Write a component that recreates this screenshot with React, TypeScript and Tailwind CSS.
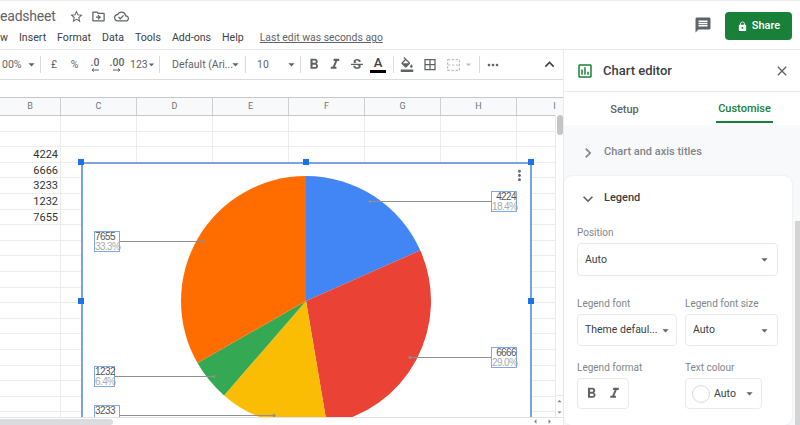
import {
  MdArrowDropDown, MdBorderAll, MdChevronRight, MdClose, MdExpandLess, MdExpandMore, MdFormatBold,
  MdFormatColorFill, MdFormatItalic, MdLock, MdMessage, MdMoreHoriz, MdMoreVert, MdOutlineCloudDone,
  MdOutlineDriveFileMove, MdOutlineInsertChart, MdOutlineStarBorder, MdStrikethroughS, MdArrowLeft,
  MdArrowRight, MdArrowDropUp,
} from 'react-icons/md';

const columns = ['B', 'C', 'D', 'E', 'F', 'G', 'H', 'I'];
const values = ['', '', '4224', '6666', '3233', '1232', '7655', '', '', '', '', '', '', '', '', '', '', '', '', ''];

const slices = [
  { value: 4224, color: '#4285f4' },
  { value: 6666, color: '#ea4335' },
  { value: 3233, color: '#fbbc04' },
  { value: 1232, color: '#34a853' },
  { value: 7655, color: '#ff6d01' },
];

const labels = [
  { value: '4224', pct: '18.4%', box: 'left-[408px] top-[27px] w-[26px] h-[21px] text-right' },
  { value: '7655', pct: '33.3%', box: 'left-[11px] top-[67px] w-[26px] h-[21px] text-left' },
  { value: '6666', pct: '29.0%', box: 'left-[408px] top-[183px] w-[26px] h-[21px] text-right' },
  { value: '1232', pct: '6.4%', box: 'left-[11px] top-[202px] w-[21px] h-[21px] text-left' },
  { value: '3233', pct: '', box: 'left-[11px] top-[241px] w-[26px] h-[21px] text-left' },
];

// leader lines in chart coordinates, dot end first
const leaders = [
  [287, 37.5, 408, 37.5],
  [120, 77.5, 37, 77.5],
  [327, 193.5, 408, 193.5],
  [131, 212.5, 32, 212.5],
  [191, 251.5, 37, 251.5],
];

const CX = 223;
const CY = 137;
const R = 125;
const total = slices.reduce((sum, s) => sum + s.value, 0);

const point = (fraction: number) => {
  const a = fraction * Math.PI * 2;
  return `${CX + R * Math.sin(a)} ${CY - R * Math.cos(a)}`;
};

const Divider = ({ className = '' }: { className?: string }) => (
  <div className={`h-[17px] w-px shrink-0 bg-[#dadce0] ${className}`} />
);

const Caret = ({ className = '' }: { className?: string }) => (
  <MdArrowDropDown className={`w-[15px] shrink-0 text-[15px] text-[#5f6368] ${className}`} />
);

const Pie = () => {
  let start = 0;
  return (
    <svg className="absolute left-0 top-0" width="448" height="270" viewBox="0 0 448 270">
      {slices.map(s => {
        const end = start + s.value / total;
        const large = end - start > 0.5 ? 1 : 0;
        const d = `M ${CX} ${CY} L ${point(start)} A ${R} ${R} 0 ${large} 1 ${point(end)} Z`;
        start = end;
        return <path key={s.value} d={d} fill={s.color} />;
      })}
      {leaders.map(l => (
        <g key={l[1]}>
          <line x1={l[0]} y1={l[1]} x2={l[2]} y2={l[3]} stroke="#8f8f8f" strokeWidth="1" />
          <circle cx={l[0]} cy={l[1]} r="1.6" fill="#8f8f8f" />
        </g>
      ))}
    </svg>
  );
};

const Handle = ({ className }: { className: string }) => (
  <div className={`absolute h-[6px] w-[6px] bg-[#1a73e8] ${className}`} />
);

const Decimal = ({ text, arrow, className }: { text: string; arrow: string; className: string }) => (
  <div className={`flex shrink-0 flex-col items-center leading-[10px] ${className}`}>
    <span className="text-[10.5px] font-medium">{text}</span>
    <svg width="8" height="4" viewBox="0 0 8 4" fill="none" stroke="#5f6368" strokeWidth="1">
      <path d={arrow} />
    </svg>
  </div>
);

const Toolbar = () => (
  <div className="flex h-[30px] items-center whitespace-nowrap border-b border-[#dadce0] text-[10.5px] text-[#5f6368]">
    <span className="w-[24px] shrink-0 pl-[2px]">00%</span>
    <Caret />
    <Divider className="ml-[1px]" />
    <span className="ml-[3px] w-[20px] shrink-0 text-center">£</span>
    <span className="w-[21px] shrink-0 text-center">%</span>
    <Decimal text=".0" arrow="M8 2 H1 M3 0.5 L1 2 L3 3.5" className="w-[20px]" />
    <Decimal text=".00" arrow="M0 2 H7 M5 0.5 L7 2 L5 3.5" className="w-[24px]" />
    <span className="ml-[1px] w-[16px] shrink-0 text-center">123</span>
    <MdArrowDropDown className="-ml-[1px] w-[13px] shrink-0 text-[13px]" />
    <Divider className="ml-[1px]" />
    <span className="ml-[12px] w-[54px] shrink-0">Default (Ari...</span>
    <Caret className="ml-[2px]" />
    <Divider className="ml-[2px]" />
    <span className="ml-[11px] w-[27px] shrink-0">10</span>
    <Caret />
    <Divider className="ml-[1px]" />
    <MdFormatBold className="ml-[3px] w-[20px] shrink-0 text-[17px]" />
    <MdFormatItalic className="ml-[1px] w-[20px] shrink-0 text-[17px]" />
    <MdStrikethroughS className="ml-[2px] w-[20px] shrink-0 text-[16px]" />
    <div className="ml-[1px] flex w-[20px] shrink-0 flex-col items-center leading-none">
      <span className="text-[13px] font-medium text-[#3c4043]">A</span>
      <div className="mt-[1px] h-[3px] w-[16px] bg-black" />
    </div>
    <Divider className="ml-[5px]" />
    <MdFormatColorFill className="ml-[3px] w-[20px] shrink-0 text-[15px]" />
    <MdBorderAll className="ml-[3px] w-[20px] shrink-0 text-[15px]" />
    <svg className="ml-[7px] shrink-0" width="13" height="12" viewBox="0 0 13 12" fill="none" stroke="#bdc1c6" strokeWidth="1.2" strokeDasharray="2.5 1.5">
      <rect x="0.6" y="0.6" width="11.8" height="10.8" />
      <path d="M1 6 H12" />
    </svg>
    <MdArrowDropDown className="ml-[2px] w-[13px] shrink-0 text-[13px] text-[#bdc1c6]" />
    <Divider className="ml-[4px]" />
    <MdMoreHoriz className="ml-[5px] w-[16px] shrink-0 text-[16px]" />
    <MdExpandLess className="ml-[39px] w-[19px] shrink-0 text-[19px] text-[#3c4043]" />
  </div>
);

const Sheet = () => (
  <div className="relative min-h-0 flex-1 overflow-hidden">
    <div className="h-[17px]" />
    <div className="flex h-[19px] border-y border-[#c7c7c7] bg-[#f8f9fa] text-[9px] text-[#70757a]">
      {columns.map((c, i) => (
        <div key={c} className={`flex shrink-0 items-center justify-center border-r border-[#d0d0d0] ${i === 0 ? 'w-[61px]' : 'w-[76px]'}`}>
          {c}
        </div>
      ))}
    </div>
    {values.map((v, i) => (
      <div key={i} className="flex h-[15.6px] border-b border-[#ececec] text-[11px] leading-[15px] text-[#333]">
        {columns.map((c, j) => (
          <div key={c} className={`shrink-0 border-r border-[#ececec] pr-[2px] text-right ${j === 0 ? 'w-[61px]' : 'w-[76px]'}`}>
            {j === 0 ? v : ''}
          </div>
        ))}
      </div>
    ))}

    {/* chart floats over the grid */}
    <div className="absolute left-[81px] top-[82px] h-[300px] w-[451px] border-x-2 border-t-2 border-x-[#7ea2e0] border-t-[#7ea2e0] bg-white font-['Liberation_Sans',sans-serif]">
      <Pie />
      {labels.map(l => (
        <div key={l.value} className={`absolute whitespace-nowrap border border-[#7ea8ea] text-[10px] leading-[10px] tracking-[-0.6px] ${l.box}`}>
          <div className="text-[#555]">{l.value}</div>
          {l.pct && <div className="text-[#aaa]">{l.pct}</div>}
        </div>
      ))}
      <MdMoreVert className="absolute left-[428px] top-[3px] text-[17px] text-[#5f6368]" />
    </div>
    <Handle className="left-[78px] top-[79px]" />
    <Handle className="left-[303px] top-[79px]" />
    <Handle className="left-[528px] top-[79px]" />
    <Handle className="left-[78px] top-[218px]" />
    <Handle className="left-[528px] top-[218px]" />

    {/* vertical scrollbar */}
    <div className="absolute bottom-[8px] right-0 top-[35px] flex w-[8px] flex-col justify-end border-l border-[#e8e8e8] bg-white">
      <div className="absolute left-[1px] top-0 h-[20px] w-[6px] rounded bg-[#c4c4c4]" />
      <div className="flex h-[22px] flex-col items-center border-t border-[#e8e8e8] text-[#80868b]">
        <MdArrowDropUp className="text-[11px]" />
        <MdArrowDropDown className="text-[11px]" />
      </div>
    </div>

    {/* horizontal scrollbar */}
    <div className="absolute bottom-0 left-0 flex h-[8px] w-full items-center border-t border-[#e3e3e3] bg-white">
      <div className="h-[6px] w-[113px] rounded-r bg-[#dadce0]" />
      <div className="ml-auto mr-[8px] flex gap-[3px] text-[#80868b]">
        <MdArrowLeft className="text-[11px]" />
        <MdArrowRight className="text-[11px]" />
      </div>
    </div>
  </div>
);

const Label = ({ children }: { children: string }) => (
  <div className="mb-[4px] whitespace-nowrap text-[10px] leading-[12px] text-[#80868b]">{children}</div>
);

const Select = ({ text, className }: { text: string; className: string }) => (
  <div className={`flex items-center justify-between whitespace-nowrap rounded border border-[#e8eaed] pl-[7px] pr-[5px] text-[10.5px] text-[#3c4043] ${className}`}>
    <span>{text}</span>
    <Caret />
  </div>
);

const Editor = () => (
  <div className="flex w-[237px] shrink-0 flex-col border-l border-[#ececec] bg-white">
    <div className="flex h-[42px] shrink-0 items-center border-b border-[#e8eaed] pl-[12px] pr-[10px]">
      <MdOutlineInsertChart className="text-[18px] text-[#188038]" />
      <span className="ml-[9px] text-[13px] font-medium text-[#3c4043]">Chart editor</span>
      <MdClose className="ml-auto text-[16px] text-[#5f6368]" />
    </div>
    <div className="flex h-[33px] shrink-0 pt-[6px] text-[11px] font-medium">
      <div className="flex h-[25px] w-[121px] items-center justify-center text-[#5f6368]">Setup</div>
      <div className="ml-[31px] flex h-[25px] w-[57px] items-center justify-center border-b-2 border-[#188038] text-[#188038]">Customise</div>
    </div>
    <div className="relative flex min-h-0 flex-1 flex-col bg-[#f8f9fa] pr-[8px]">
      <div className="flex h-[51px] shrink-0 items-center pl-[14px] pt-[4px] text-[11px] font-medium text-[#80868b]">
        <MdChevronRight className="text-[20px] text-[#80868b]" />
        <span className="ml-[6px]">Chart and axis titles</span>
      </div>
      <div className="flex-1 rounded-lg bg-white pl-[13px] shadow-[0_0_2px_rgba(60,64,67,0.12)]">
        <div className="flex h-[45px] items-center text-[11px] font-medium text-[#3c4043]">
          <MdExpandMore className="ml-[1px] text-[20px] text-[#5f6368]" />
          <span className="ml-[6px]">Legend</span>
        </div>
        <div className="mt-[6px]"><Label>Position</Label></div>
        <Select text="Auto" className="h-[33px] w-[201px]" />
        <div className="mt-[22px] flex gap-[8px]">
          <div>
            <Label>Legend font</Label>
            <Select text="Theme defaul..." className="h-[32px] w-[100px]" />
          </div>
          <div>
            <Label>Legend font size</Label>
            <Select text="Auto" className="h-[32px] w-[93px]" />
          </div>
        </div>
        <div className="mt-[16px] flex gap-[8px]">
          <div className="w-[100px]">
            <Label>Legend format</Label>
            <div className="flex h-[31px] w-[52px] items-center justify-around rounded border border-[#e8eaed] px-[2px] text-[#5f6368]">
              <MdFormatBold className="text-[17px]" />
              <MdFormatItalic className="text-[17px]" />
            </div>
          </div>
          <div>
            <Label>Text colour</Label>
            <div className="flex h-[31px] w-[77px] items-center rounded border border-[#e8eaed] pl-[6px] text-[10.5px] text-[#3c4043]">
              <div className="h-[18px] w-[18px] rounded-full border border-[#dadce0]" />
              <span className="ml-[4px]">Auto</span>
              <Caret className="ml-[6px]" />
            </div>
          </div>
        </div>
      </div>
      <div className="absolute bottom-0 right-0 top-[96px] w-[5px] bg-[#d4d4d4]" />
    </div>
  </div>
);

export default function App() {
  return (
    <div className="flex h-[425px] w-[800px] flex-col overflow-hidden bg-white font-['Roboto',sans-serif]">
      <div className="relative h-[50px] shrink-0 border-y border-[#e8eaed] border-t-[#ececec]">
        <div className="flex h-[31px] items-center">
          <span className="w-[69px] text-[14px] tracking-[-0.2px] text-[#5f6368]">eadsheet</span>
          <MdOutlineStarBorder className="text-[15px] text-[#5f6368]" />
          <MdOutlineDriveFileMove className="ml-[7px] text-[15px] text-[#5f6368]" />
          <MdOutlineCloudDone className="ml-[8px] text-[15px] text-[#5f6368]" />
        </div>
        <div className="-mt-[2px] flex h-[16px] items-center gap-[11px] text-[10.6px] text-[#3c4043]">
          <span>w</span>
          <span>Insert</span>
          <span>Format</span>
          <span>Data</span>
          <span>Tools</span>
          <span>Add-ons</span>
          <span>Help</span>
          <span className="ml-[5px] text-[10.4px] text-[#5f6368] underline">Last edit was seconds ago</span>
        </div>
        <MdMessage className="absolute left-[694px] top-[15px] text-[18px] text-[#5f6368]" />
        <div className="absolute left-[725px] top-[11px] flex h-[28px] w-[67px] items-center justify-center gap-[4px] rounded bg-[#188038] text-[11px] font-medium text-white">
          <MdLock className="text-[11px]" />
          <span>Share</span>
        </div>
      </div>
      <div className="flex min-h-0 flex-1">
        <div className="flex min-w-0 flex-1 flex-col">
          <Toolbar />
          <Sheet />
        </div>
        <Editor />
      </div>
    </div>
  );
}
